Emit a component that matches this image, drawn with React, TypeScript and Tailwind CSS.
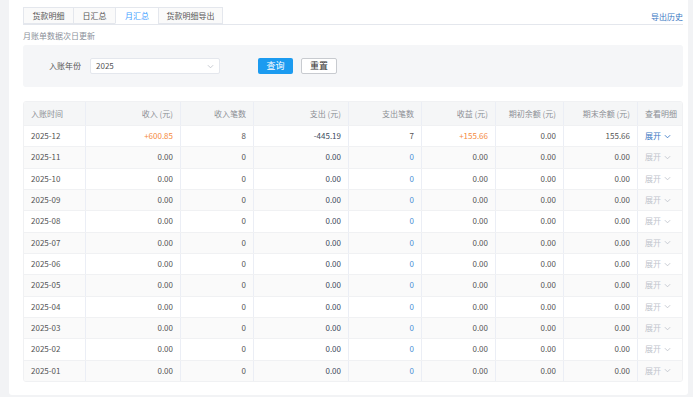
import React from 'react';

const months = ['2025-12', '2025-11', '2025-10', '2025-09', '2025-08', '2025-07', '2025-06', '2025-05', '2025-04', '2025-03', '2025-02', '2025-01'];

const tabs = ['货款明细', '日汇总', '月汇总', '货款明细导出'];

const cols = 'grid grid-cols-[62px_95px_73px_95px_73px_74px_68px_74px_46px]';

const Chevron = ({ className }: { className?: string }) => (
  <svg width="7" height="5" viewBox="0 0 8 5" className={className} fill="none">
    <path d="M1 1l3 3 3-3" stroke="currentColor" strokeWidth="1" />
  </svg>
);

const Cell = ({ children, right, className = '' }: { children: React.ReactNode; right?: boolean; className?: string }) => (
  <div className={`flex items-center px-[7px] border-r border-[#ebeef5] last:border-r-0 ${right ? 'justify-end' : ''} ${className}`}>
    {children}
  </div>
);

const App: React.FC = () => {
  return (
    <div
      className="w-[693px] h-[397px] overflow-hidden bg-[#f2f3f5] pl-[9px] pr-[5px] text-[#606266]"
      style={{ fontFamily: '"Noto Sans CJK SC", "Noto Sans", sans-serif' }}
    >
      <div className="bg-white h-[395px] pl-[14px] pr-[5px] pt-[8px] rounded-b-[3px]">
        {/* tabs */}
        <div className="flex items-end justify-between border-b border-[#e4e7ed] h-[17px]">
          <div className="flex h-[17px]">
            {tabs.map((t, i) => (
              <div
                key={t}
                className={`h-[17px] flex items-center justify-center border border-[#e4e7ed] text-[8px] -ml-px first:ml-0 ${
                  i === 2 ? 'bg-white text-[#409eff] border-b-white' : 'bg-[#fafafa] text-[#555]'
                } ${i === 0 ? 'w-[51px]' : i === 1 ? 'w-[43px]' : i === 2 ? 'w-[44px]' : 'w-[65px]'}`}
              >
                {t}
              </div>
            ))}
          </div>
          <div className="text-[8px] text-[#3a78c3] pb-[3px] leading-none">导出历史</div>
        </div>

        <div className="text-[8px] text-[#8a8f99] mt-[6px] leading-[10px]">月账单数据次日更新</div>

        {/* filter */}
        <div className="mt-[4px] h-[42px] bg-[#f5f6f8] rounded-[3px] flex items-center">
          <div className="w-[58px] text-right text-[8px] text-[#555]">入账年份</div>
          <div className="ml-[9px] w-[130px] h-[16px] bg-white border border-[#e4e7ed] rounded-[2px] flex items-center justify-between px-[5px] text-[8px] text-[#555]">
            <span>2025</span>
            <Chevron className="text-[#c0c4cc]" />
          </div>
          <button className="ml-[38px] w-[35px] h-[16px] bg-[#1c9bf0] text-white text-[9px] rounded-[2px] flex items-center justify-center">
            查询
          </button>
          <button className="ml-[8px] w-[36px] h-[16px] bg-white border border-[#c8cbd0] text-[#333] text-[9px] rounded-[2px] flex items-center justify-center">
            重置
          </button>
        </div>

        {/* table */}
        <div className="mt-[14px] rounded-[3px] overflow-hidden border border-[#f0f1f3] text-[8px]">
          <div className={`${cols} h-[23px] bg-[#f5f6f7] text-[#8c8f95]`}>
            <Cell>入账时间</Cell>
            <Cell right>收入 (元)</Cell>
            <Cell right>收入笔数</Cell>
            <Cell right>支出 (元)</Cell>
            <Cell right>支出笔数</Cell>
            <Cell right>收益 (元)</Cell>
            <Cell right>期初余额 (元)</Cell>
            <Cell right>期末余额 (元)</Cell>
            <Cell>查看明细</Cell>
          </div>
          {months.map((m, i) => {
            const first = i === 0;
            return (
              <div
                key={m}
                className={`${cols} h-[21.33px] border-t border-[#f0f1f3] ${i % 2 === 1 ? 'bg-[#fafafa]' : 'bg-white'}`}
              >
                <Cell className="text-[#555]">{m}</Cell>
                <Cell right className={first ? 'text-[#f5893d]' : 'text-[#555]'}>{first ? '+600.85' : '0.00'}</Cell>
                <Cell right className="text-[#555]">{first ? '8' : '0'}</Cell>
                <Cell right className="text-[#3d4a5c]">{first ? '-445.19' : '0.00'}</Cell>
                <Cell right className={first ? 'text-[#555]' : 'text-[#4a8fd6]'}>{first ? '7' : '0'}</Cell>
                <Cell right className={first ? 'text-[#f5893d]' : 'text-[#555]'}>{first ? '+155.66' : '0.00'}</Cell>
                <Cell right className="text-[#555]">0.00</Cell>
                <Cell right className="text-[#555]">{first ? '155.66' : '0.00'}</Cell>
                <Cell className={first ? 'text-[#3a78c3]' : 'text-[#c0c4cc]'}>
                  <span className="mr-[3px]">展开</span>
                  <Chevron />
                </Cell>
              </div>
            );
          })}
        </div>
      </div>
    </div>
  );
};

export default App;
